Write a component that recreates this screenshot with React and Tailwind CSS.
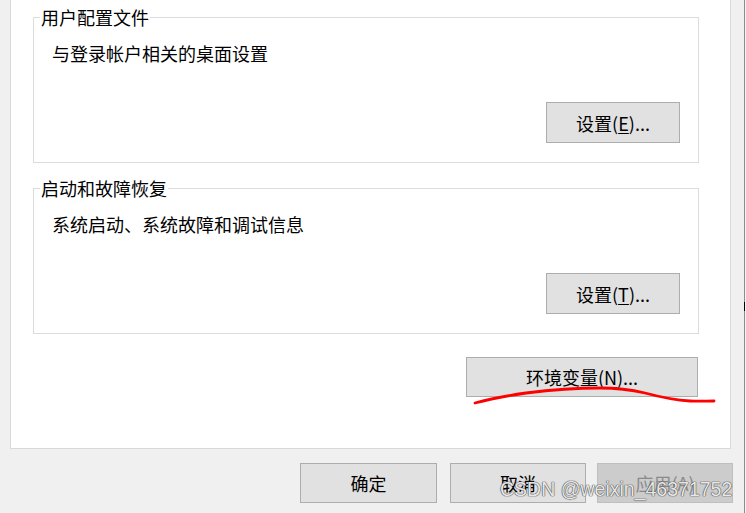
import React from "react";

function WinButton({ children, className = "", disabled = false }) {
  return (
    <div
      className={
        "flex items-center justify-center text-[18px] leading-[24px] border " +
        (disabled
          ? "bg-[#cccccc] border-[#bfbfbf] text-[#8a8a8a] "
          : "bg-[#e1e1e1] border-[#adadad] text-black ") +
        className
      }
    >
      {children}
    </div>
  );
}

function GroupBox({ title, desc, button, className = "" }) {
  return (
    <fieldset className={"border border-[#dcdcdc] m-0 px-0 pt-[12px] pb-[19px] min-w-0 " + className}>
      <legend className="ml-[6px] px-[1px] text-[18px] leading-[24px]">{title}</legend>
      <div className="flex flex-col pl-[18px] pr-[18px]">
        <div className="text-[18px] leading-[24px]">{desc}</div>
        <WinButton className="self-end mt-[37px] h-[41px] w-[134px]">{button}</WinButton>
      </div>
    </fieldset>
  );
}

export default function App() {
  return (
    <div className="relative w-[746px] h-[513px] bg-[#f0f0f0] flex overflow-hidden font-['Noto_Sans_CJK_SC',sans-serif] text-black">
      <div className="w-[744px] flex flex-col">
        <div className="flex h-[449px]">
          <div className="w-[10px]" />
          <div className="w-[721px] bg-white border-l border-r border-b border-[#d9d9d9] pl-[22px] pr-[31px] flex flex-col">
            <GroupBox
              className="mt-[5px]"
              title="用户配置文件"
              desc="与登录帐户相关的桌面设置"
              button={
                <span>
                  设置(<span className="underline underline-offset-2">E</span>)...
                </span>
              }
            />
            <GroupBox
              className="mt-[13px]"
              title="启动和故障恢复"
              desc="系统启动、系统故障和调试信息"
              button={
                <span>
                  设置(<span className="underline underline-offset-2">T</span>)...
                </span>
              }
            />
            <WinButton className="self-end mt-[23px] mr-[1px] h-[40px] w-[232px]">
              <span>
                环境变量(<span className="underline underline-offset-2">N</span>)...
              </span>
            </WinButton>
          </div>
        </div>
        <div className="flex justify-end pt-[14px] pr-[11px]">
          <WinButton className="h-[40px] w-[137px]">确定</WinButton>
          <WinButton className="ml-[13px] h-[40px] w-[136px]">取消</WinButton>
          <WinButton disabled className="ml-[11px] h-[40px] w-[136px]">
            <span>应用(A)</span>
          </WinButton>
        </div>
      </div>
      <div className="w-[1px] flex flex-col">
        <div className="h-[302px] bg-[#8c8c8c]" />
        <div className="h-[9px] bg-black" />
        <div className="flex-1 bg-[#8c8c8c]" />
      </div>
      <div className="w-[1px] bg-[#f4f4f4]" />

      <svg className="absolute left-0 top-0 pointer-events-none" width="746" height="513" viewBox="0 0 746 513">
        <path
          d="M475 403 C 490 399, 505 396, 526 393 C 550 390, 575 388, 600 388 C 620 388, 632 390, 645 393 C 660 397, 672 400, 690 401 C 700 401.5, 706 401, 714 401"
          fill="none"
          stroke="#ff0000"
          strokeWidth="2.8"
          strokeLinecap="round"
        />
      </svg>

      <div className="absolute left-[500px] top-[480px] text-[19.5px] leading-[19.5px] font-['Liberation_Sans',sans-serif] text-[rgba(255,255,255,0.9)] [text-shadow:0_0_1px_#444,0_0_1px_#444,0_0_1px_#666] whitespace-nowrap pointer-events-none">
        CSDN @weixin_46371752
      </div>
    </div>
  );
}
